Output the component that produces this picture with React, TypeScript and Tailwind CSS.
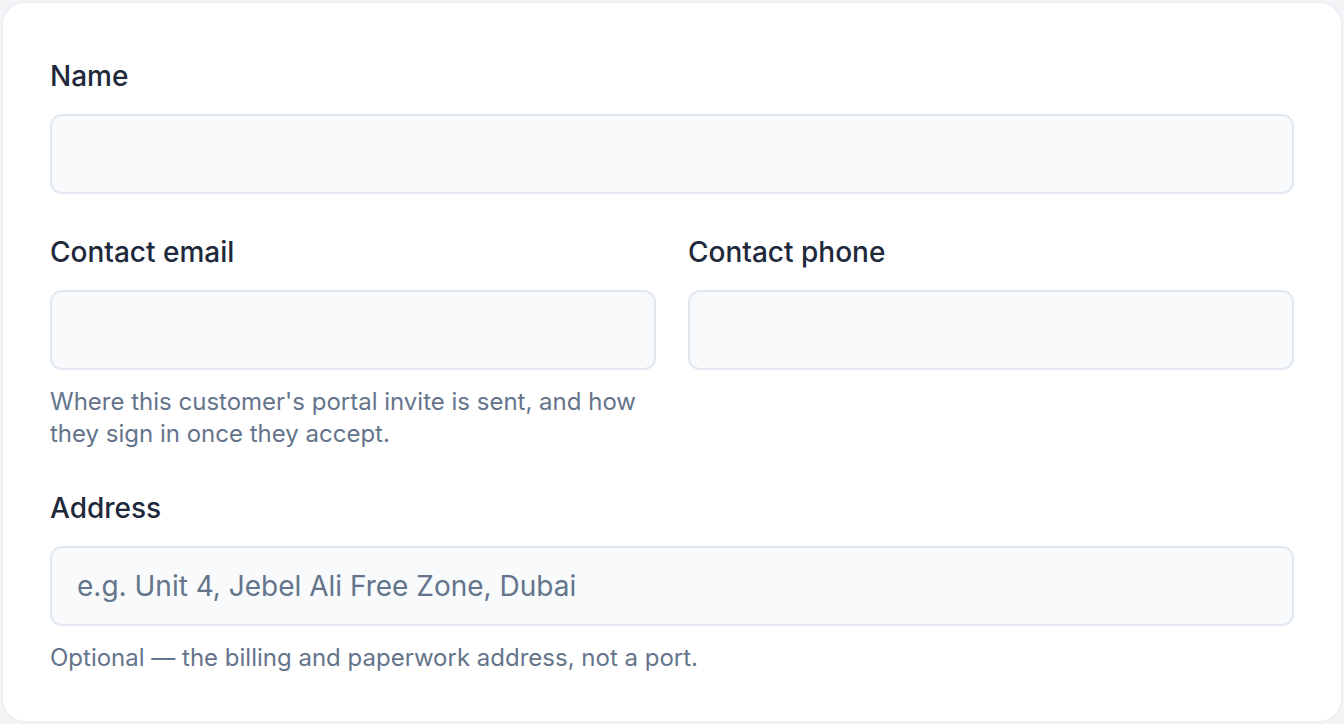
import React from 'react';

const inputCls =
  'block w-full h-[80px] rounded-[12px] border-2 border-[#e2e8f0] bg-[#f8fafc] px-[25px] text-[28px] text-[#1e293b] placeholder:text-[#64748b] outline-none';

const labelCls = 'block text-[28px] leading-[36px] font-medium text-[#1e293b] mb-[20px]';

const helpCls = 'mt-[16px] text-[24px] leading-[32px] text-[#64748b]';

const App: React.FC = () => {
  return (
    <div className="min-h-screen bg-[#f4f5f7] p-px" style={{ fontFamily: 'Inter, "Noto Sans", sans-serif' }}>
      <div className="h-[722px] rounded-[24px] border-2 border-[#eceff3] bg-white px-[47px] pt-[55px] pb-[47px]">
        {/* Name */}
        <div>
          <label className={labelCls}>Name</label>
          <input className={inputCls} type="text" />
        </div>

        {/* Contact row */}
        <div className="mt-[40px] grid grid-cols-2 gap-[32px]">
          <div>
            <label className={labelCls}>Contact email</label>
            <input className={inputCls} type="email" />
            <p className={helpCls}>
              Where this customer's portal invite is sent, and how they sign in once they accept.
            </p>
          </div>
          <div>
            <label className={labelCls}>Contact phone</label>
            <input className={inputCls} type="tel" />
          </div>
        </div>

        {/* Address */}
        <div className="mt-[40px]">
          <label className={labelCls}>Address</label>
          <input className={inputCls} type="text" placeholder="e.g. Unit 4, Jebel Ali Free Zone, Dubai" />
          <p className={helpCls}>Optional — the billing and paperwork address, not a port.</p>
        </div>
      </div>
    </div>
  );
};

export default App;
